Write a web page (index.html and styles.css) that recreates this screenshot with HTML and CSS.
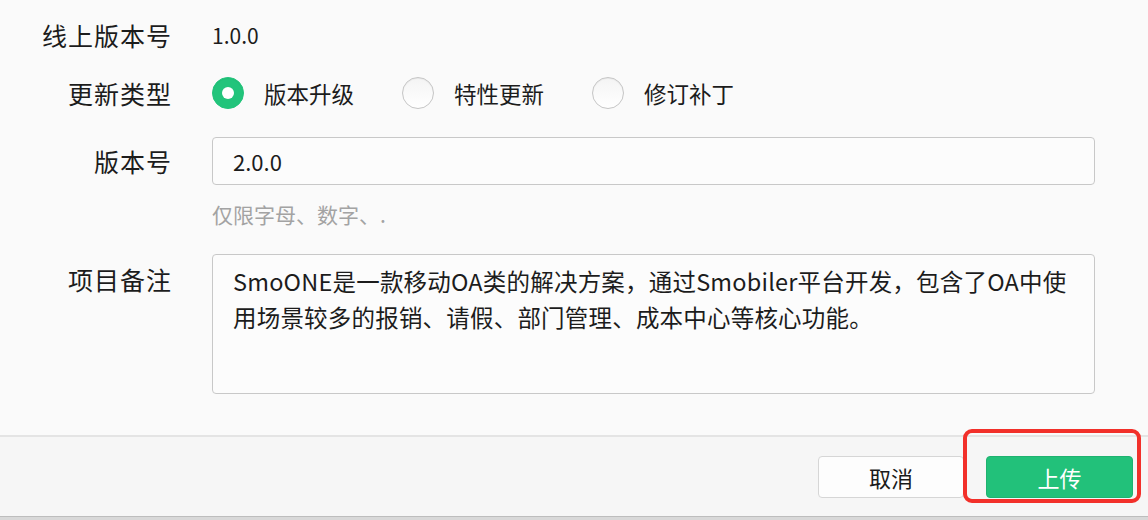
FILE: index.html
```html
<!DOCTYPE html>
<html lang="zh-CN">
<head>
    <meta charset="UTF-8">
    <meta name="viewport" content="width=device-width, initial-scale=1.0">
    <link rel="stylesheet" href="styles.css">
</head>
<body>

    <div class="form">
        <div class="row row-text">
            <div class="label">线上版本号</div>
            <div class="value">1.0.0</div>
        </div>

        <div class="row row-text">
            <div class="label">更新类型</div>
            <div class="radios">
                <label class="radio checked"><span class="dot"></span>版本升级</label>
                <label class="radio"><span class="dot"></span>特性更新</label>
                <label class="radio"><span class="dot"></span>修订补丁</label>
            </div>
        </div>

        <div class="row row-input">
            <div class="label">版本号</div>
            <div class="field">
                <div class="input">2.0.0</div>
                <div class="hint">仅限字母、数字、.</div>
            </div>
        </div>

        <div class="row row-area">
            <div class="label">项目备注</div>
            <div class="textarea">SmoONE是一款移动OA类的解决方案，通过Smobiler平台开发，包含了OA中使用场景较多的报销、请假、部门管理、成本中心等核心功能。</div>
        </div>
    </div>

    <div class="footer">
        <button class="btn btn-cancel">取消</button>
        <div class="highlight">
            <button class="btn btn-upload">上传</button>
        </div>
    </div>

    <div class="taskbar"></div>

</body>
</html>
```

FILE: styles.css
```css
body {
    margin: 0;
    background-color: #fafafa;
    font-family: "Noto Sans CJK SC", "Noto Sans", sans-serif;
    color: #1c1c1c;
    overflow: hidden;
}

.form {
    padding: 11px 0 41px 0;
}

.row {
    display: flex;
    align-items: flex-start;
}

.label {
    width: 172px;
    flex-shrink: 0;
    margin-right: 40px;
    text-align: right;
    font-size: 25px;
    letter-spacing: 1px;
}

.row-text {
    height: 48px;
    line-height: 48px;
    margin-bottom: 10px;
}

.value {
    font-size: 21px;
}

.radios {
    display: flex;
}

.radio {
    display: flex;
    align-items: center;
    font-size: 22.5px;
    margin-right: 48px;
}

.dot {
    width: 30px;
    height: 30px;
    border-radius: 50%;
    border: 1px solid #c6c6c6;
    background: linear-gradient(#f4f4f4, #ffffff);
    box-shadow: inset 0 1px 1px rgba(0, 0, 0, 0.05);
    margin-right: 20px;
    position: relative;
}

.radio.checked .dot {
    border-color: #22c47b;
    background: #22c47b;
}

.radio.checked .dot::after {
    content: "";
    position: absolute;
    left: 9px;
    top: 9px;
    width: 12px;
    height: 12px;
    border-radius: 50%;
    background: #fff;
}

.row-input {
    margin-top: 20px;
}

.row-input .label {
    line-height: 48px;
}

.field {
    width: 883px;
}

.input {
    height: 46px;
    line-height: 46px;
    border: 1px solid #c8c8c8;
    border-radius: 4px;
    background: #fcfcfc;
    padding-left: 20px;
    font-size: 22px;
}

.hint {
    margin-top: 14px;
    line-height: 30px;
    font-size: 21px;
    color: #a3a3a3;
}

.row-area {
    margin-top: 25px;
}

.row-area .label {
    line-height: 50px;
}

.textarea {
    width: 846px;
    height: 130px;
    border: 1px solid #c8c8c8;
    border-radius: 4px;
    background: #fcfcfc;
    padding: 8px 15px 0 20px;
    font-size: 23.5px;
    letter-spacing: 0.2px;
    line-height: 36px;
}

.footer {
    border-top: 2px solid #e4e4e4;
    background: #f6f6f6;
    height: 81px;
    display: flex;
    justify-content: flex-end;
    align-items: flex-start;
    padding: 19px 15px 0 0;
    box-sizing: border-box;
}

.btn {
    width: 146px;
    height: 42px;
    border-radius: 4px;
    font-family: "Noto Sans CJK SC", sans-serif;
    font-size: 22px;
    cursor: pointer;
}

.btn-cancel {
    background: #fdfdfd;
    border: 1px solid #d6d6d6;
    color: #1a1a1a;
    margin-right: 22px;
}

.btn-upload {
    display: block;
    background: #22c17a;
    border: 1px solid #1fb270;
    color: #fff;
    width: 147px;
}

.highlight {
    position: relative;
}

.highlight::after {
    content: "";
    position: absolute;
    left: -23px;
    top: -27px;
    width: 170px;
    height: 66px;
    border: 4px solid #f2302a;
    border-radius: 9px;
    pointer-events: none;
}

.taskbar {
    height: 3px;
    border-top: 1px solid #bdbdbd;
    background: #d8d8d8;
}
```
